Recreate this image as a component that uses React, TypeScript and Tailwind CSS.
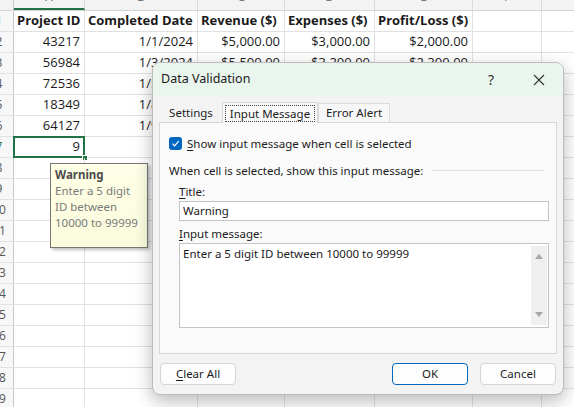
import React from 'react'

const cols = [71, 113, 87, 90, 98, 69, 80]
const letters = ['A', 'B', 'C', 'D', 'E', 'F', 'G']

type Cell = { text: string; bold?: boolean; align?: 'left' | 'right' }

const rows: Cell[][] = [
  [
    { text: 'Project ID', bold: true },
    { text: 'Completed Date', bold: true },
    { text: 'Revenue ($)', bold: true },
    { text: 'Expenses ($)', bold: true },
    { text: 'Profit/Loss ($)', bold: true }
  ],
  [
    { text: '43217', align: 'right' },
    { text: '1/1/2024', align: 'right' },
    { text: '$5,000.00', align: 'right' },
    { text: '$3,000.00', align: 'right' },
    { text: '$2,000.00', align: 'right' }
  ],
  [
    { text: '56984', align: 'right' },
    { text: '1/3/2024', align: 'right' },
    { text: '$5,500.00', align: 'right' },
    { text: '$3,200.00', align: 'right' },
    { text: '$2,300.00', align: 'right' }
  ],
  [
    { text: '72536', align: 'right' },
    { text: '1/5/2024', align: 'right' }
  ],
  [
    { text: '18349', align: 'right' },
    { text: '1/8/2024', align: 'right' }
  ],
  [
    { text: '64127', align: 'right' },
    { text: '1/9/2024', align: 'right' }
  ]
]

const rowCount = 19

const Sheet = () => (
  <div className="flex flex-col font-['Open_Sans',sans-serif] text-[13px] text-[#1b1b1b]">
    {/* column headers */}
    <div className="flex h-[11px] bg-[#f3f3f3] border-b border-[#d4d4d4]">
      <div className="w-[14px] shrink-0 border-r border-[#c8c8c8]" />
      {cols.map((w, i) => (
        <div
          key={letters[i]}
          style={{ width: w }}
          className={
            'shrink-0 overflow-hidden border-r border-[#dadada] text-center text-[12px] leading-[12px] ' +
            (i === 0 ? 'border-b-2 border-b-[#217346] text-[#217346]' : 'text-[#777]')
          }
        >
          <div className="-mt-[9px]">{letters[i]}</div>
        </div>
      ))}
    </div>
    {Array.from({ length: rowCount }).map((_, r) => {
      const data = rows[r] ?? []
      const n = r + 1
      return (
        <div key={n} className="flex h-[21px] border-b border-[#e1e1e1]">
          <div className="w-[14px] shrink-0 overflow-hidden border-r border-[#c8c8c8] bg-[#f7f7f7]">
            <div
              className={
                '-ml-[16px] w-[30px] text-center text-[12px] leading-[20px] ' +
                (n === 7 ? 'text-[#217346]' : 'text-[#555]')
              }
            >
              {n}
            </div>
          </div>
          {cols.map((w, c) => {
            const cell = data[c]
            const selected = n === 7 && c === 0
            return (
              <div
                key={c}
                style={{ width: w }}
                className={
                  'relative flex shrink-0 items-center whitespace-nowrap border-r border-[#e1e1e1] ' +
                  (cell?.align === 'right' ? 'justify-end pr-[4px]' : 'pl-[3px]')
                }
              >
                {cell && <span className={cell.bold ? 'font-bold' : ''}>{cell.text}</span>}
                {selected && (
                  <>
                    <div className="absolute -left-px -top-px -right-px -bottom-px border-2 border-[#217346]" />
                    <span className="absolute right-[4px] font-normal">9</span>
                    <div className="absolute -right-[4px] -bottom-[4px] h-[6px] w-[6px] border border-white bg-[#217346]" />
                  </>
                )}
              </div>
            )
          })}
        </div>
      )
    })}
  </div>
)

const Tooltip = () => (
  <div className="absolute left-[50px] top-[163px] h-[85px] w-[98px] border border-[#767676] bg-gradient-to-b from-[#ffffe8] to-[#fbfbdc] px-[4px] pt-[3px] font-['Noto_Sans',sans-serif] text-[11.5px] leading-[16px] shadow-[2px_2px_3px_rgba(0,0,0,0.25)]">
    <div className="font-bold text-[#4a4a4a]">Warning</div>
    <div className="text-[#7a7a7a]">Enter a 5 digit</div>
    <div className="text-[#7a7a7a]">ID between</div>
    <div className="text-[#7a7a7a]">10000 to 99999</div>
  </div>
)

const Btn = ({ children, primary }: { children: React.ReactNode; primary?: boolean }) => (
  <button
    className={
      'h-[22px] w-[76px] rounded-[4px] bg-[#fdfdfd] text-[11.5px] text-[#1b1b1b] ' +
      (primary ? 'border border-[#0067c0] shadow-[inset_0_0_0_1px_#fff]' : 'border border-[#d5d5d5]')
    }
  >
    {children}
  </button>
)

const Dialog = () => (
  <div className="absolute left-[152px] top-[62px] flex h-[333px] w-[412px] flex-col overflow-hidden rounded-[8px] border border-[#bcbcbc] bg-[#f3f3f3] font-['Noto_Sans',sans-serif] text-[11.5px] text-[#1b1b1b] shadow-[0_6px_18px_rgba(0,0,0,0.28)]">
    <div className="flex h-[33px] shrink-0 items-center bg-[#eaf5ed] pl-[8px]">
      <span className="text-[12.5px]">Data Validation</span>
      <span className="ml-auto mr-[39px] text-[14px] text-[#333]">?</span>
      <svg width="12" height="12" viewBox="0 0 12 12" className="mr-[18px]">
        <path d="M1 1 L11 11 M11 1 L1 11" stroke="#333" strokeWidth="1.1" />
      </svg>
    </div>
    <div className="flex flex-col px-[6px] pt-[5px]">
      <div className="flex h-[21px] items-end pl-[1px]">
        <div className="flex h-[19px] w-[62px] items-center justify-center">Settings</div>
        <div className="relative z-10 -mb-px flex h-[21px] w-[96px] items-center justify-center border border-b-0 border-[#d6d6d6] bg-[#fafafa]">
          <span className="border border-dotted border-[#444] px-[4px] leading-[15px]">Input Message</span>
        </div>
        <div className="flex h-[19px] w-[72px] items-center justify-center border border-b-0 border-[#dcdcdc] bg-[#f7f7f7]">
          Error Alert
        </div>
      </div>
      <div className="flex h-[232px] flex-col border border-[#d6d6d6] bg-[#fafafa] pl-[9px] pr-[6px]">
        <div className="mt-[12px] flex items-center">
          <div className="flex h-[13px] w-[13px] items-center justify-center rounded-[3px] bg-[#0067c0]">
            <svg width="9" height="9" viewBox="0 0 9 9">
              <path d="M1.5 4.7 L3.6 6.8 L7.7 2.2" fill="none" stroke="#fff" strokeWidth="1.2" />
            </svg>
          </div>
          <span className="ml-[5px]">
            <span className="underline underline-offset-2">S</span>how input message when cell is selected
          </span>
        </div>
        <div className="mt-[10px] flex items-center">
          <span>When cell is selected, show this input message:</span>
          <div className="ml-[8px] mr-[5px] h-px flex-1 bg-[#e2e2e2]" />
        </div>
        <div className="ml-[10px] mt-[3px] flex flex-col pr-[1px]">
          <span>
            <span className="underline underline-offset-2">T</span>itle:
          </span>
          <div className="mt-[1px] flex h-[20px] items-center border border-[#c4c4c4] bg-white pl-[3px]">Warning</div>
          <span className="mt-[4px]">
            <span className="underline underline-offset-2">I</span>nput message:
          </span>
          <div className="mt-[1px] flex h-[85px] border border-[#c4c4c4] bg-white">
            <div className="flex-1 pl-[3px] pt-[1px]">Enter a 5 digit ID between 10000 to 99999</div>
            <div className="my-[2px] mr-[1px] flex w-[16px] flex-col items-center justify-between bg-[#efefef] py-[8px]">
              <svg width="8" height="5" viewBox="0 0 8 5">
                <path d="M0 5 L4 0 L8 5 Z" fill="#a8a8a8" />
              </svg>
              <svg width="8" height="5" viewBox="0 0 8 5">
                <path d="M0 0 L4 5 L8 0 Z" fill="#a8a8a8" />
              </svg>
            </div>
          </div>
        </div>
      </div>
      <div className="mt-[9px] flex items-center pl-[1px] pr-[1px]">
        <Btn>
          <span className="underline underline-offset-2">C</span>lear All
        </Btn>
        <div className="ml-auto flex gap-[12px]">
          <Btn primary>OK</Btn>
          <Btn>Cancel</Btn>
        </div>
      </div>
    </div>
  </div>
)

export default function App() {
  return (
    <div className="relative h-[407px] w-[574px] overflow-hidden bg-white">
      <Sheet />
      <Tooltip />
      <Dialog />
    </div>
  )
}
